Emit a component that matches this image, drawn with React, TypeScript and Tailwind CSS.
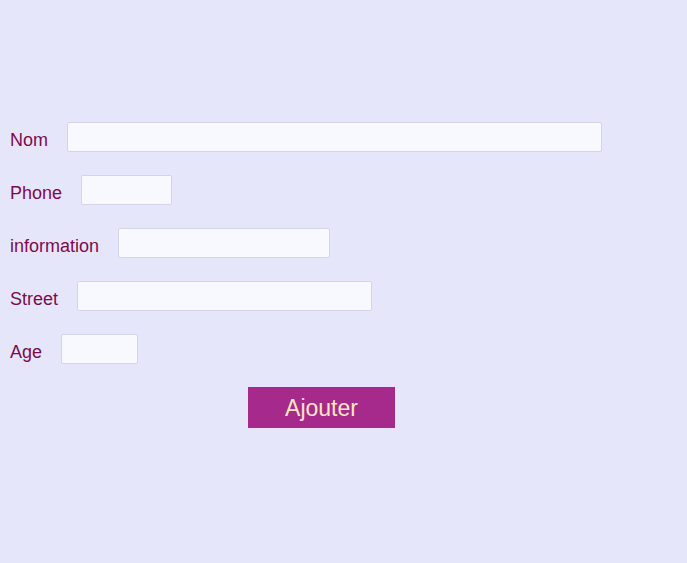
export default function App() {
  const rows: { label: string; w: string }[] = [
    { label: "Nom", w: "w-[535px]" },
    { label: "Phone", w: "w-[91px]" },
    { label: "information", w: "w-[212px]" },
    { label: "Street", w: "w-[295px]" },
    { label: "Age", w: "w-[77px]" },
  ];
  return (
    <div
      className="min-h-[563px] w-full bg-[#e6e6fa] pl-[10px] pt-[122px]"
      style={{ fontFamily: '"Liberation Sans", Arial, sans-serif' }}
    >
      <div className="flex flex-col gap-[23px]">
        {rows.map((r) => (
          <div key={r.label} className="flex items-center gap-[19px] h-[30px]">
            <span className="text-[18px] leading-[21px] text-[#7d0a4e] pt-[7px]">{r.label}</span>
            <input
              type="text"
              className={`${r.w} h-[30px] bg-[#f8f9ff] border border-[#d2d4ec] rounded-[2px] outline-none`}
            />
          </div>
        ))}
      </div>
      <button className="mt-[23px] ml-[238px] w-[147px] h-[41px] bg-[#a52a8c] text-[#ffe4c4] text-[23px] leading-none pt-[2px]">
        Ajouter
      </button>
    </div>
  );
}
